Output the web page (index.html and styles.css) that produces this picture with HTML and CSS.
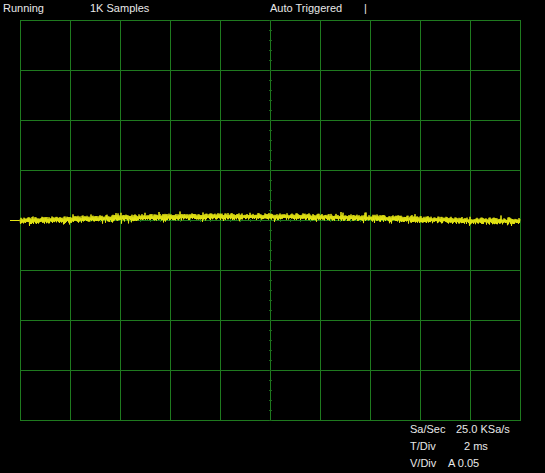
FILE: index.html
```html
<!DOCTYPE html>
<html lang="en">
<head>
  <meta charset="UTF-8">
  <title>Scope</title>
  <link rel="stylesheet" href="styles.css">
  <script src="script.js" defer></script>
</head>
<body>
  <!-- Status line -->
  <header class="status">
    <span class="status-run">Running</span>
    <span class="status-samples">1K Samples</span>
    <span class="status-trig">Auto Triggered</span>
    <span class="status-bar">|</span>
  </header>

  <!-- Screen with graticule and trace -->
  <svg class="screen" id="screen" width="545" height="401" viewBox="0 0 545 401">
    <g class="grid" id="grid"></g>
    <polyline class="trace" id="trace" points=""></polyline>
  </svg>

  <!-- Readouts -->
  <footer class="readout">
    <span class="lbl">Sa/Sec</span><span class="val">25.0 KSa/s</span>
    <span class="lbl">T/Div</span><span class="val val-t">2 ms</span>
    <span class="lbl">V/Div</span><span class="val val-v">A 0.05</span>
  </footer>
</body>
</html>
```

FILE: styles.css
```css
* {
  margin: 0;
  padding: 0;
  box-sizing: border-box;
}

body {
  background: #000;
  color: #e8e8e8;
  font-family: 'Liberation Sans', Arial, sans-serif;
  font-size: 11px;
  width: 545px;
  height: 473px;
  overflow: hidden;
}

/* Status line */
.status {
  display: flex;
  height: 20px;
  line-height: 17px;
  padding-left: 3px;
}

.status-run { width: 87px; }
.status-samples { width: 180px; }
.status-trig { width: 94px; }

/* Screen */
.screen {
  display: block;
}

.grid line {
  stroke: #1f7a1f;
  stroke-width: 1;
}

.grid .tick {
  stroke: #1c6a1c;
}

.trace {
  fill: none;
  stroke: #e6e614;
  stroke-width: 1;
}

/* Readouts */
.readout {
  display: grid;
  grid-template-columns: 46px auto;
  padding-left: 410px;
  line-height: 17px;
}

.val-t { padding-left: 8px; }
.val-v { margin-left: -8px; }
```

FILE: script.js
```js
// graticule: 10 x 8 divisions of 50px, center ticks every 10px
var grid = document.getElementById('grid');
var ns = 'http://www.w3.org/2000/svg';

function line(x1, y1, x2, y2, cls) {
  var l = document.createElementNS(ns, 'line');
  l.setAttribute('x1', x1);
  l.setAttribute('y1', y1);
  l.setAttribute('x2', x2);
  l.setAttribute('y2', y2);
  if (cls) l.setAttribute('class', cls);
  grid.appendChild(l);
}

for (var i = 0; i <= 10; i++) {
  var x = 20.5 + i * 50;
  line(x, 0, x, 401);
}
for (var j = 0; j <= 8; j++) {
  var y = 0.5 + j * 50;
  line(20, y, 521, y);
}
for (var k = 0; k <= 40; k++) {
  line(269, 0.5 + k * 10, 272, 0.5 + k * 10, 'tick');
}
for (var m = 0; m <= 50; m++) {
  line(20.5 + m * 10, 199, 20.5 + m * 10, 202, 'tick');
}

// noisy trace, 1K samples over 10 divisions
var seed = 11;
function rnd() {
  seed = (seed * 16807) % 2147483647;
  return seed / 2147483647;
}

var pts = ['10,200.5', '19,200.5'];
for (var s = 0; s <= 1000; s++) {
  var px = 20 + s * 0.5;
  var t = s / 1000;
  var base = 201 - 4.5 * Math.sin(Math.PI * Math.min(1, t * 1.1));
  var n = (s % 2 ? 1 : -1) * (1 + rnd() * 2.5);
  if (rnd() < 0.1) n *= 1.6;
  pts.push(px + ',' + (base + n).toFixed(1));
}
document.getElementById('trace').setAttribute('points', pts.join(' '));
```
